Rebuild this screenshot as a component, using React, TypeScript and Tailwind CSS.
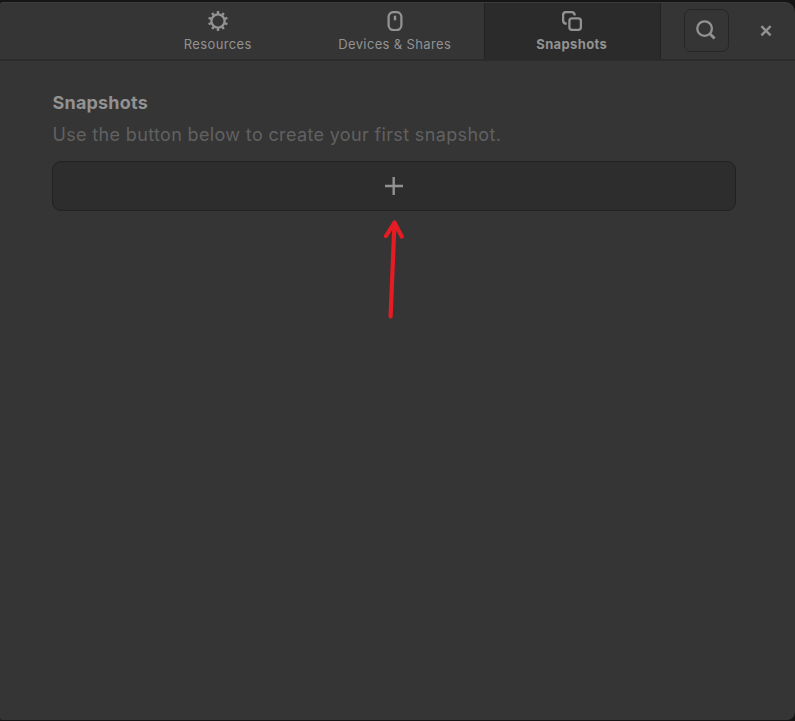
import type { ReactNode } from "react";

function GearIcon() {
  const teeth = Array.from({ length: 10 }, (_, i) => i * 36);
  return (
    <svg width="20" height="20" viewBox="0 0 20 20" fill="none" stroke="currentColor">
      <circle cx="10" cy="10" r="6.6" strokeWidth="2.3" />
      {teeth.map((a) => (
        <path key={a} d="M10 0.1V3" strokeWidth="2.4" transform={`rotate(${a} 10 10)`} />
      ))}
    </svg>
  );
}

function MouseIcon() {
  return (
    <svg width="20" height="20" viewBox="0 0 20 20" fill="none" stroke="currentColor" strokeWidth="2.3">
      <rect x="3.6" y="1.1" width="12.8" height="18" rx="5" />
      <path d="M10 5.6V8.2" strokeWidth="2.4" strokeLinecap="round" />
    </svg>
  );
}

function CopiesIcon() {
  return (
    <svg width="20" height="20" viewBox="0 0 20 20" fill="none" stroke="currentColor" strokeWidth="2.3">
      <rect x="7.4" y="7.4" width="11.5" height="11.5" rx="2.6" />
      <path d="M4.7 12.7C2.4 12.7 1.1 11.5 1.1 9.3V4.2C1.1 2.2 2.3 1.1 4.2 1.1H9.4C11.5 1.1 12.7 2.3 12.7 4.5" />
    </svg>
  );
}

function Tab({ label, active, icon }: { label: string; active?: boolean; icon: ReactNode }) {
  return (
    <button
      className={
        "flex h-full w-[177px] flex-col items-center border-x pt-[8px] pr-[2px] text-[#929292] " +
        (active ? "border-[#232323] bg-[#2b2b2b] font-bold" : "border-transparent font-normal")
      }
    >
      {icon}
      <span className="mt-[4px] pl-[0.5px] text-[13px] leading-[18px] tracking-[0.36px] whitespace-nowrap">
        {label}
      </span>
    </button>
  );
}

export default function App() {
  return (
    <div className="relative h-[721px] w-[795px] overflow-hidden bg-[#151515] pt-[2px] font-['Inter',sans-serif]">
      <div className="flex h-[718px] flex-col overflow-hidden rounded-tl-[3px] rounded-tr-[10px] rounded-br-[8px] rounded-bl-[2px] border-t border-[#3c3c3c] bg-[#353535]">
        <header className="flex h-[58px] shrink-0 border-b-2 border-[#2b2b2b] pl-[130px]">
          <Tab label="Resources" icon={<GearIcon />} />
          <Tab label="Devices & Shares" icon={<MouseIcon />} />
          <Tab label="Snapshots" active icon={<CopiesIcon />} />
          <div className="flex flex-1 items-start pt-[6px] pl-[23px] text-[#929292]">
            <button className="flex h-[43px] w-[45px] items-center justify-center rounded-[7px] border border-[#262626] pr-px pb-px">
              <svg width="20" height="20" viewBox="0 0 20 20" fill="none" stroke="currentColor" strokeWidth="2.3">
                <circle cx="8.6" cy="8.6" r="7.3" />
                <path d="M13.8 13.8L18.6 18.6" strokeWidth="2.8" />
              </svg>
            </button>
            <button className="mt-[16px] ml-[31px]">
              <svg width="12" height="12" viewBox="0 0 12 12" fill="none" stroke="currentColor" strokeWidth="2.4">
                <path d="M1.4 1.1L10.6 10.3M10.6 1.1L1.4 10.3" />
              </svg>
            </button>
          </div>
        </header>
        <main className="pt-[28px] pr-[59px] pl-[52px]">
          <h1 className="pl-[0.5px] text-[18px] leading-[27px] font-bold tracking-[0.2px] text-[#929292]">Snapshots</h1>
          <p className="mt-[5px] pl-[0.5px] text-[18px] leading-[27px] tracking-[0.35px] whitespace-nowrap text-[#616161]">
            Use the button below to create your first snapshot.
          </p>
          <button className="mt-[13px] flex h-[50px] w-full items-center justify-center rounded-[9px] border border-[#212121] bg-[#2d2d2d] pb-px text-[#929292]">
            <svg width="18" height="18" viewBox="0 0 18 18" fill="none" stroke="currentColor" strokeWidth="2.4">
              <path d="M8.7 0V18M0 9H18" />
            </svg>
          </button>
        </main>
      </div>
      <svg
        className="pointer-events-none absolute top-[216px] left-[380px]"
        width="28"
        height="106"
        viewBox="0 0 28 106"
        fill="none"
        stroke="#e51c24"
        strokeWidth="4.2"
        strokeLinecap="round"
        strokeLinejoin="round"
      >
        <path d="M10.6 100.5L14.5 6.5M6 20L14.5 6.5L21.7 20.5" />
      </svg>
    </div>
  );
}
